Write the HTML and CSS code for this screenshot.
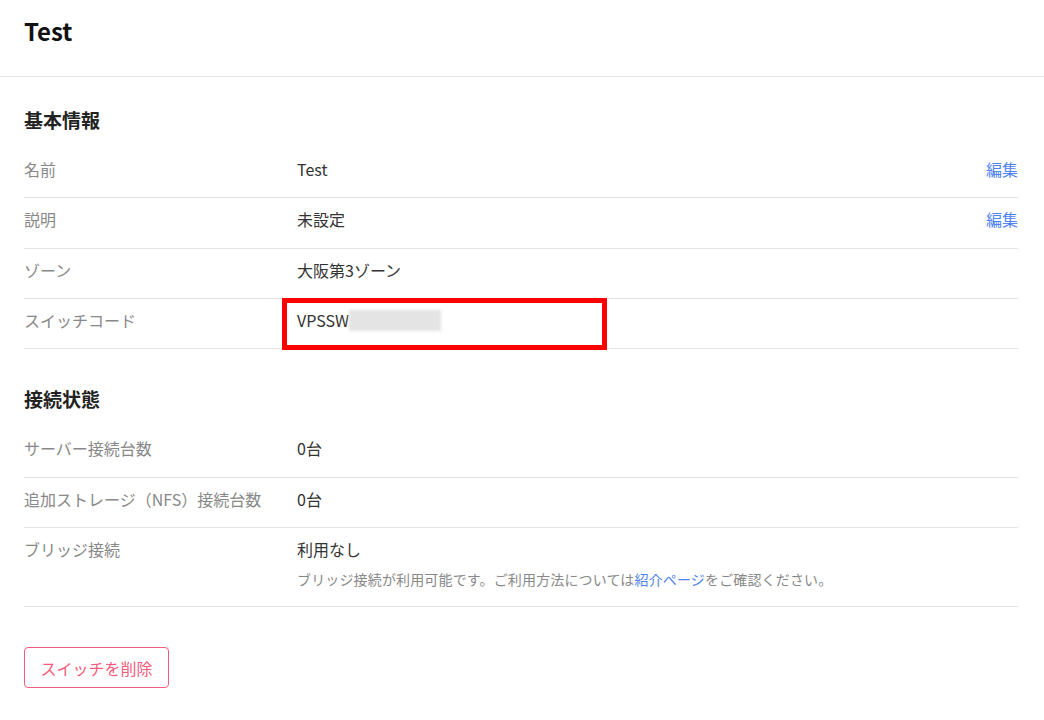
FILE: index.html
```html
<!DOCTYPE html>
<html lang="ja">
<head>
<meta charset="utf-8">
<title>Test</title>
<link rel="stylesheet" href="styles.css">
</head>
<body>
<header class="page-header">
  <h1 class="page-title">Test</h1>
</header>
<main class="content">
  <section class="section">
    <h2 class="section-title">基本情報</h2>
    <div class="row">
      <div class="label">名前</div>
      <div class="value">Test</div>
      <a class="edit" href="#">編集</a>
    </div>
    <div class="row">
      <div class="label">説明</div>
      <div class="value">未設定</div>
      <a class="edit" href="#">編集</a>
    </div>
    <div class="row">
      <div class="label">ゾーン</div>
      <div class="value">大阪第3ゾーン</div>
      <span></span>
    </div>
    <div class="row row-marked">
      <div class="label">スイッチコード</div>
      <div class="value code">VPSSW<span class="masked"></span></div>
      <span></span>
      <div class="highlight"></div>
    </div>
  </section>
  <section class="section section-second">
    <h2 class="section-title">接続状態</h2>
    <div class="row">
      <div class="label">サーバー接続台数</div>
      <div class="value">0台</div>
      <span></span>
    </div>
    <div class="row">
      <div class="label">追加ストレージ（NFS）接続台数</div>
      <div class="value">0台</div>
      <span></span>
    </div>
    <div class="row">
      <div class="label">ブリッジ接続</div>
      <div class="value">
        <div>利用なし</div>
        <p class="note">ブリッジ接続が利用可能です。ご利用方法については<a href="#" class="note-link">紹介ページ</a>をご確認ください。</p>
      </div>
      <span></span>
    </div>
  </section>
  <button class="danger-btn" type="button">スイッチを削除</button>
</main>
</body>
</html>
```
FILE: styles.css
```css
* { box-sizing: border-box; }
html, body {
  margin: 0;
  padding: 0;
  background: #fff;
}
body {
  font-family: "Noto Sans CJK JP", "Noto Sans", sans-serif;
  color: #333;
  font-size: 16px;
}
.page-header {
  height: 77px;
  padding: 14px 24px 0;
  border-bottom: 1px solid #e3e3e3;
}
.page-title {
  margin: 0;
  font-size: 24px;
  line-height: 34px;
  font-weight: 700;
  color: #111;
}
.content {
  padding: 0 26px 0 24px;
}
.section {
  padding-top: 26px;
}
.section-second {
  padding-top: 33px;
}
.section-title {
  margin: 0 0 11px;
  font-size: 19px;
  line-height: 34px;
  font-weight: 700;
  color: #222;
}
.row {
  position: relative;
  display: grid;
  grid-template-columns: 273px 1fr auto;
  padding: 10px 0 17px;
  border-bottom: 1px solid #e3e3e3;
  line-height: 22.33px;
  font-size: 16px;
}
.label {
  color: #888;
}
.value {
  color: #333;
}
.edit {
  color: #4f83f0;
  text-decoration: none;
}
.code {
  display: flex;
  align-items: center;
}
.masked {
  display: inline-block;
  width: 92px;
  height: 21px;
  background: #e4e4e4;
  filter: blur(1.5px);
}
.highlight {
  position: absolute;
  left: 258px;
  top: -1px;
  width: 325px;
  height: 52px;
  border: 5px solid #ff0000;
  pointer-events: none;
}
.note {
  margin: 9px 0 0;
  font-size: 14px;
  line-height: 20px;
  letter-spacing: 0.15px;
  color: #888;
}
.note-link {
  color: #4f83f0;
  text-decoration: none;
}
.danger-btn {
  margin-top: 40px;
  width: 145px;
  height: 41px;
  padding: 0;
  border: 1px solid #f45c7e;
  border-radius: 4px;
  background: #fff;
  color: #f45c7e;
  font-family: "Noto Sans CJK JP", "Noto Sans", sans-serif;
  font-size: 16px;
}
```
